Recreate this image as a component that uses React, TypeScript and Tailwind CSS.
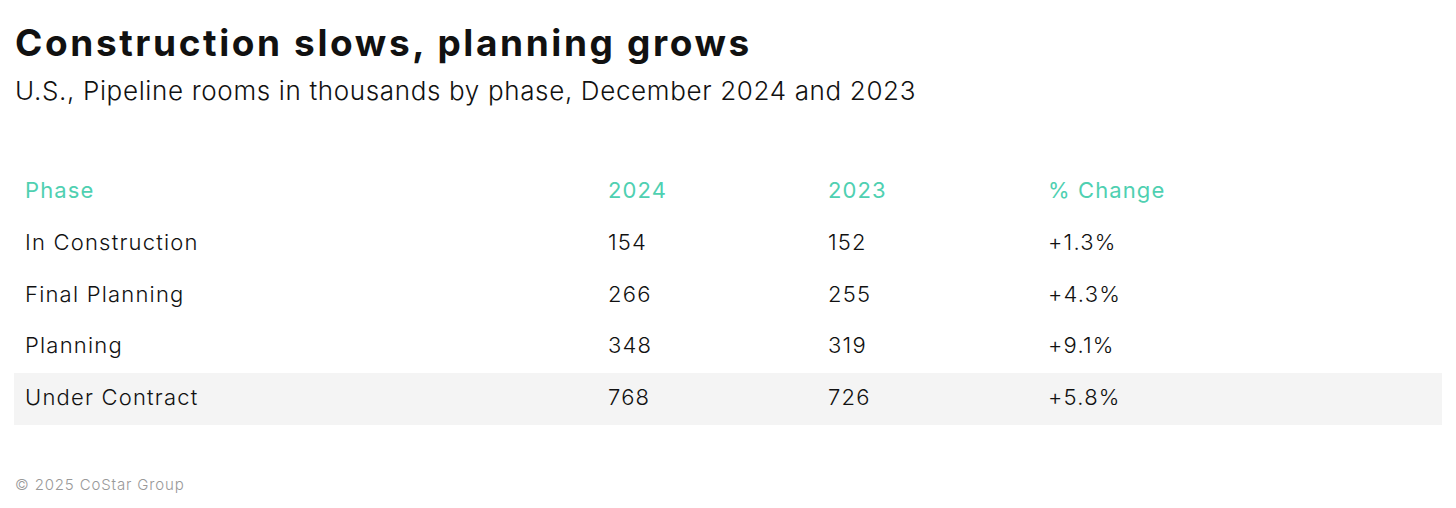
import React from "react";

const rows = [
  { phase: "In Construction", y24: "154", y23: "152", chg: "+1.3%", shade: false },
  { phase: "Final Planning", y24: "266", y23: "255", chg: "+4.3%", shade: false },
  { phase: "Planning", y24: "348", y23: "319", chg: "+9.1%", shade: false },
  { phase: "Under Contract", y24: "768", y23: "726", chg: "+5.8%", shade: true },
];

export default function App() {
  return (
    <div
      className="w-[1456px] h-[508px] bg-white text-[#111] overflow-hidden"
      style={{ fontFamily: "Inter, Lato, sans-serif" }}
    >
      <div className="pl-[15px] pt-[20px]">
        <h1 className="text-[37px] leading-[46px] font-bold tracking-[2.6px]">Construction slows, planning grows</h1>
        <p className="mt-[9px] text-[26px] leading-[32px] font-light tracking-[0.65px]">
          U.S., Pipeline rooms in thousands by phase, December 2024 and 2023
        </p>
      </div>
      <div className="mx-[14px] mt-[59px]">
        <div className="grid grid-cols-[583px_220px_220px_1fr] h-[52px] items-center pb-[4px] text-[22px] tracking-[1.1px] text-[#4fd0b1]">
          <div className="pl-[11px]">Phase</div>
          <div className="pl-[11px]">2024</div>
          <div className="pl-[11px]">2023</div>
          <div className="pl-[11px]">% Change</div>
        </div>
        {rows.map((r) => (
          <div
            key={r.phase}
            className={`grid grid-cols-[583px_220px_220px_1fr] h-[51.7px] items-center pb-[3px] text-[22px] tracking-[1.2px] font-light ${r.shade ? "bg-[#f4f4f4]" : ""}`}
          >
            <div className="pl-[11px]">{r.phase}</div>
            <div className="pl-[11px]">{r.y24}</div>
            <div className="pl-[11px]">{r.y23}</div>
            <div className="pl-[11px]">{r.chg}</div>
          </div>
        ))}
      </div>
      <div className="pl-[15px] mt-[49px] text-[15px] tracking-[0.85px] text-[#999] font-light">© 2025 CoStar Group</div>
    </div>
  );
}
